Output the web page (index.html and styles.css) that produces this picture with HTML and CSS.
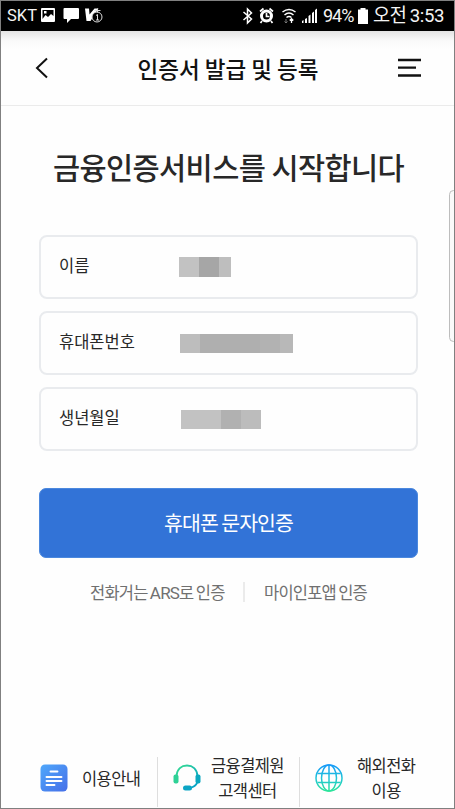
FILE: index.html
```html
<!DOCTYPE html>
<html lang="ko">
<head>
<meta charset="utf-8">
<title>인증서 발급 및 등록</title>
<link rel="stylesheet" href="styles.css">
</head>
<body>
<div class="phone">
  <div class="status">
    <span class="carrier">SKT</span>
    <svg class="status-left" width="64" height="18" viewBox="0 0 64 18">
      <path fill="#fff" fill-rule="evenodd" d="M2 1h12q1 0 1 1v12q0 1-1 1H2q-1 0-1-1V2q0-1 1-1zM2.500 3v9l3-4 2.500 2 3-3 2.500 2V3zM4 4h2.500v2.500H4z"/>
      <path fill="#fff" d="M24.500 1h13.500q1 0 1 1v9q0 1-1 1H31l-4 4v-4h-2.500q-1 0-1-1V2q0-1 1-1z"/>
      <path fill="#fff" d="M45 1.500h4l.5 6 5-6h4l-8 12.500h-4z"/>
      <circle cx="57" cy="10" r="5" fill="#000" stroke="#ddd" stroke-width="1"/>
      <path d="M56 8.500l1.500-1V13M56 13h3M54.500 3.500h6M57.500 1.500v4" fill="none" stroke="#ddd"/>
    </svg>
    <svg class="status-right" width="76" height="18" viewBox="0 0 76 18">
      <path d="M1.500 5l8 7L5.500 16V2l4 4-8 7" fill="none" stroke="#fff" stroke-width="1.500"/>
      <circle cx="24.500" cy="9" r="5" fill="none" stroke="#fff" stroke-width="3"/>
      <path d="M24.500 6v3.500h3M18 4.500l3.500-3M31 4.500l-3.500-3M20 14l-1.500 2M29 14l1.500 2" fill="none" stroke="#fff" stroke-width="1.700"/>
      <path d="M40.500 5q6.500-5 13 0M42.500 8q4.500-4 9 0M44.500 10.500q2.500-2 5 0" fill="none" stroke="#fff" stroke-width="1.500"/>
      <path d="M44 12v4M42.500 14.500l1.500 1.500 1.500-1.500" stroke="#777" fill="none"/><path d="M49.500 16v-4M47.700 13.500l1.800-1.800 1.800 1.800" stroke="#fff" fill="none" stroke-width="1.300"/>
      <path d="M60 16v-2l1.500-1v3zM63 16v-4l2-1v5zM66.500 16V9l2-1.500V16zM70 16V6l2-1.500V16zM73 16V3l2-1.500V16z" fill="#fff"/>
    </svg>
    <span class="percent">94%</span>
    <svg class="battery" width="10" height="16" viewBox="0 0 10 16"><path fill="#fff" d="M2.500 0h5v1.500H10V16H0V1.500h2.500z"/></svg>
    <span class="clock">오전 3:53</span>
  </div>
  <header class="header">
    <svg class="back" width="14" height="22" viewBox="0 0 14 22"><path d="M12 1.500L2 11l10 9.500" fill="none" stroke="#111" stroke-width="2"/></svg>
    <h1>인증서 발급 및 등록</h1>
    <svg class="menu" width="24" height="20" viewBox="0 0 24 20"><path d="M0 2h23M0 9.700h18M0 17.500h23" stroke="#111" stroke-width="2.300"/></svg>
  </header>
  <main class="main">
    <h2>금융인증서비스를 시작합니다</h2>
    <div class="fields">
      <div class="field"><span class="label">이름</span><span class="mask mask-name"></span></div>
      <div class="field"><span class="label">휴대폰번호</span><span class="mask mask-phone"></span></div>
      <div class="field"><span class="label">생년월일</span><span class="mask mask-birth"></span></div>
    </div>
    <button class="submit">휴대폰 문자인증</button>
    <div class="links"><span class="link ars">전화거는 <span class="latin">ARS</span>로 인증</span><span class="link app">마이인포앱 인증</span></div>
  </main>
  <footer class="footer">
    <div class="item guide">
      <svg width="28" height="28" viewBox="0 0 28 28"><defs><linearGradient id="doc" x1="0" y1="0" x2="1" y2="1"><stop stop-color="#4fa8fb"/><stop offset="1" stop-color="#466fe8"/></linearGradient></defs><rect x=".5" y=".5" width="27" height="27" rx="4.500" fill="url(#doc)"/><path d="M10.500 7.500h7M6.500 13h15M6.500 17h15M6.500 21h8" stroke="#fff" stroke-width="1.900" stroke-linecap="round"/></svg>
      <span>이용안내</span>
    </div>
    <div class="item center">
      <svg width="28" height="28" viewBox="0 0 28 28"><defs><linearGradient id="head" x1="0" y1="0" x2="1" y2="1"><stop offset=".2" stop-color="#2ed39a"/><stop offset=".85" stop-color="#09a5c5"/></linearGradient></defs><path d="M3.500 12C4 5 8.500 1.500 14 1.500S24 5 24.500 12M24.500 18q-2 5-8 6" fill="none" stroke="url(#head)" stroke-width="2"/><rect x=".5" y="10.500" width="5" height="9" rx="2" fill="#2fd196"/><rect x="22.500" y="10.500" width="5" height="9" rx="2" fill="#0ba8bf"/><rect x="10" y="21.500" width="9" height="5" rx="2.500" fill="#0ba5c5"/></svg>
      <span>금융결제원<br>고객센터</span>
    </div>
    <div class="item overseas">
      <svg width="28" height="28" viewBox="0 0 28 28"><defs><linearGradient id="globe" x1="0" y1="0" x2="0" y2="28" gradientUnits="userSpaceOnUse"><stop stop-color="#1697fb"/><stop offset=".5" stop-color="#20c4d8"/><stop offset="1" stop-color="#2de696"/></linearGradient></defs><g fill="none" stroke="url(#globe)" stroke-width="1.500"><circle cx="14" cy="14" r="13"/><ellipse cx="14" cy="14" rx="7.500" ry="13"/><path d="M14 1v26M2.500 9.500h23M2.500 18.500h23"/></g></svg>
      <span>해외전화<br>이용</span>
    </div>
  </footer>
  <div class="edge-handle"></div>
</div>
</body>
</html>
```

FILE: styles.css
```css
* { box-sizing: border-box; }
body { margin: 0; font-family: "Noto Sans CJK KR", sans-serif; color: #282828; background: #fff; }
h1, h2 { margin: 0; }
.phone { position: relative; width: 455px; height: 809px; border: 1px solid #808080; display: flex; flex-direction: column; overflow: hidden; background: #fefefe; }
.status { height: 30px; flex: none; background: #000; color: #f4f4f4; display: flex; align-items: center; padding-left: 6px; white-space: nowrap; font-size: 17px; line-height: 28px; font-family: Roboto, "Noto Sans CJK KR", sans-serif; }
.carrier { width: 33px; font-size: 16.500px; }
.status-right { margin-left: 138px; }
.percent { margin-left: 5px; width: 35px; font-size: 18px; letter-spacing: -1px; }
.battery { margin-right: 5px; }
.clock { font-size: 19px; letter-spacing: -.4px; word-spacing: -1px; transform: scaleX(.98); transform-origin: left; }
.header { height: 75px; flex: none; display: flex; align-items: center; border-bottom: 1px solid #ebebeb; background: linear-gradient(#e3e3e3, #fafafa 10px, #fefefe 18px); padding: 0 32px 0 34px; }
.header h1 { flex: 1; text-align: center; font-size: 22.500px; font-weight: 500; line-height: 30px; color: #111; padding: 0 0 1px 9px; letter-spacing: .1px; word-spacing: -1.500px; }
.main { flex: 1; padding: 0 36px 0 38px; }
.main h2 { font-size: 29.500px; font-weight: 500; line-height: 40px; margin-top: 40px; text-align: center; white-space: nowrap; letter-spacing: -.6px; word-spacing: -1.500px; }
.fields { display: flex; flex-direction: column; gap: 12px; margin-top: 49px; }
.field { height: 64px; border: 2px solid #e9ebee; border-radius: 8px; display: flex; align-items: center; padding: 0 18px 2px; font-size: 16.500px; }
.label { width: 120px; white-space: nowrap; margin-top: -2px; }
.mask { height: 19px; }
.mask-name { width: 52px; height: 20px; margin-top: 2px; background: linear-gradient(90deg, #c2c2c2 20px, #a6a6a6 20px 40px, #bebebe 40px); }
.mask-phone { width: 113px; margin: 2px 0 0 1px; background: linear-gradient(90deg, #bdbdbd 20px, #afafaf 20px 80px, #b2b2b2 80px 100px, #b8b8b8 100px); }
.mask-birth { width: 80px; margin: 3px 0 0 2px; background: linear-gradient(90deg, #c2c2c2 40px, #b1b1b1 40px 60px, #bcbcbc 60px); }
.submit { display: block; width: 100%; height: 70px; margin-top: 37px; padding: 0 0 3px; border: 1px solid #4b88de; border-radius: 7px; background: #3273d7; color: #fff; font: 20.500px "Noto Sans CJK KR", sans-serif; letter-spacing: -.9px; word-spacing: -1.500px; }
.links { display: flex; align-items: baseline; margin: 24px 0 0 51px; font-size: 16.500px; line-height: 20px; color: #707070; letter-spacing: -.8px; word-spacing: -1.500px; white-space: nowrap; }
.latin { font-family: Roboto, sans-serif; font-size: 17px; line-height: 1; }
.ars { width: 155px; border-right: 2px solid #ebebeb; }
.app { margin-left: 19px; }
.footer { height: 51px; flex: none; display: flex; line-height: 25px; font-size: 16.500px; letter-spacing: -.6px; white-space: nowrap; text-align: center; }
.item { display: flex; align-items: center; border-right: 1px solid #dedede; padding-bottom: 8px; height: 50px; }
.item:last-child { border: 0; }
.guide { width: 157px; padding-left: 39px; gap: 14px; }
.center { width: 142px; padding-left: 15px; gap: 10px; }
.overseas { padding-left: 15px; gap: 14px; }
.edge-handle { position: absolute; right: -4px; top: 189px; width: 9px; height: 152px; border: 1px solid #bdbdbd; border-radius: 6px; background: #fafafa; }
```
